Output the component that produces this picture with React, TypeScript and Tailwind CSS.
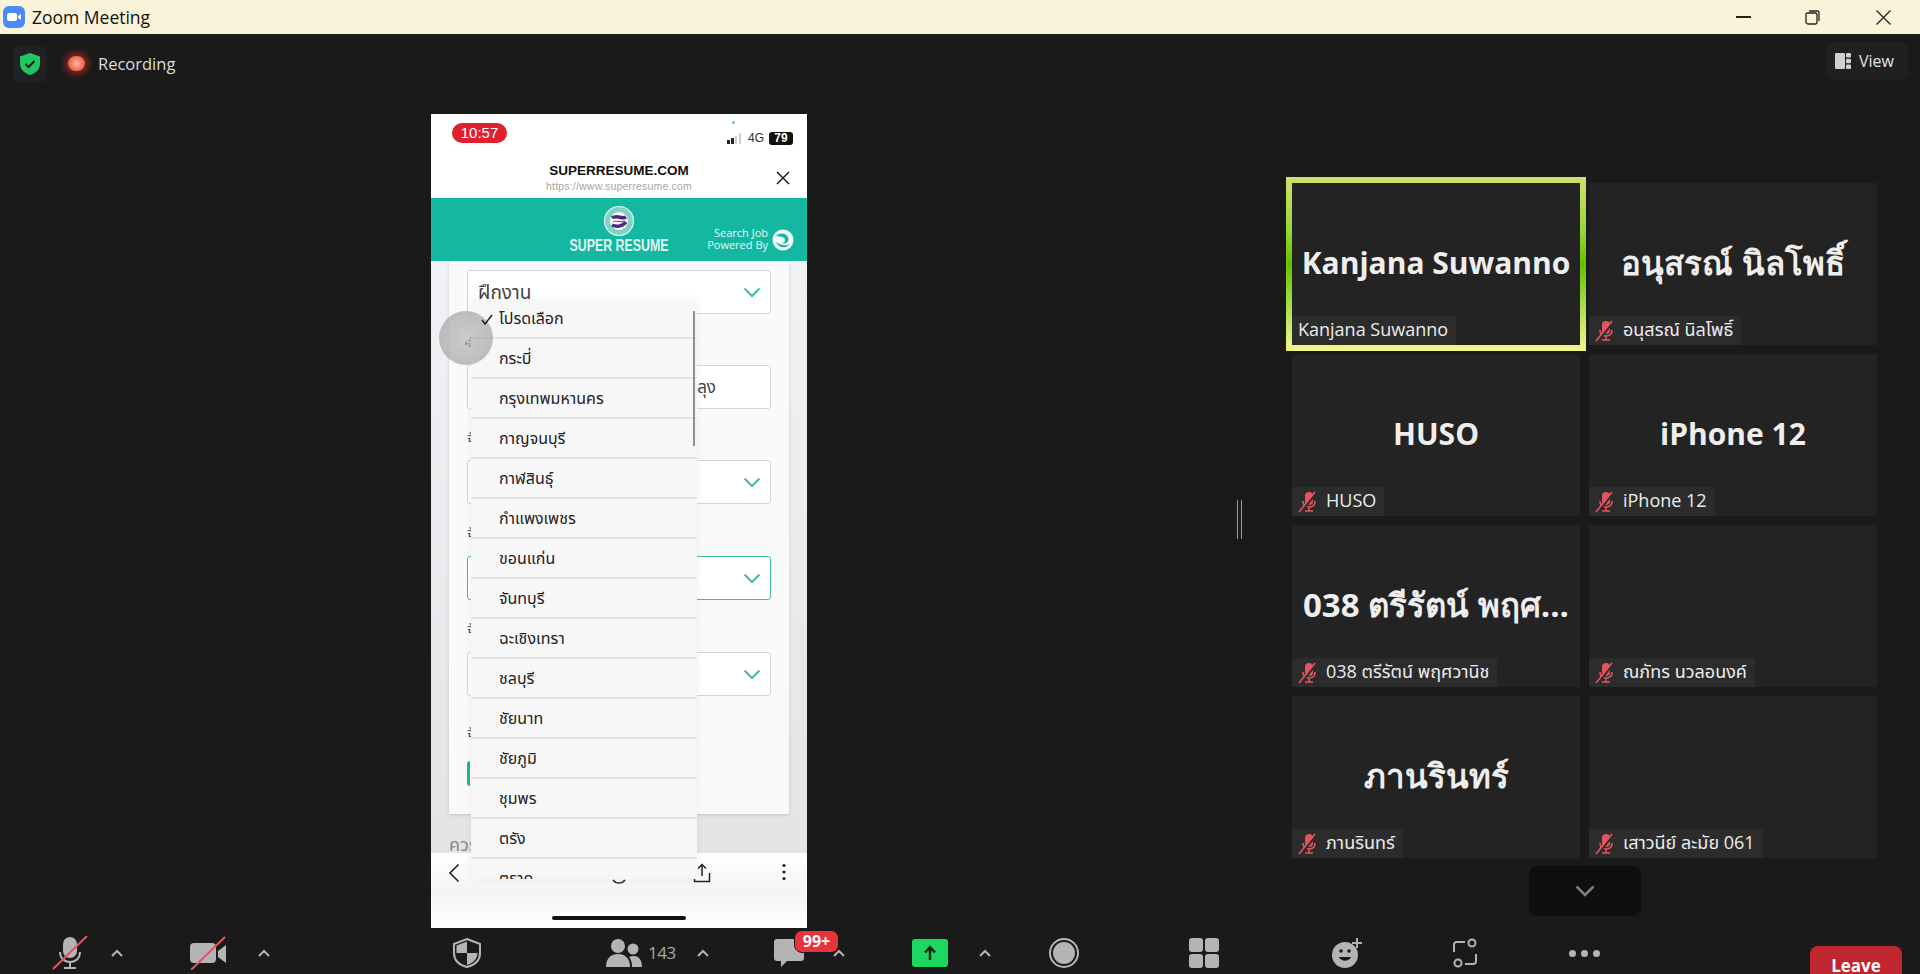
const thai = "font-['Open_Sans','Noto_Sans','Noto_Sans_Thai','Liberation_Sans',sans-serif]";

const provinces = [
  'โปรดเลือก', 'กระบี่', 'กรุงเทพมหานคร', 'กาญจนบุรี', 'กาฬสินธุ์', 'กำแพงเพชร', 'ขอนแก่น', 'จันทบุรี',
  'ฉะเชิงเทรา', 'ชลบุรี', 'ชัยนาท', 'ชัยภูมิ', 'ชุมพร', 'ตรัง', 'ตราด',
];

const tiles = [
  { big: 'Kanjana Suwanno', bigSize: 'text-[30px]', name: 'Kanjana Suwanno', active: true },
  { big: 'อนุสรณ์ นิลโพธิ์', bigSize: 'text-[33px]', name: 'อนุสรณ์ นิลโพธิ์' },
  { big: 'HUSO', bigSize: 'text-[30px]', name: 'HUSO' },
  { big: 'iPhone 12', bigSize: 'text-[30px]', name: 'iPhone 12' },
  { big: '038 ตรีรัตน์ พฤศ...', bigSize: 'text-[33px]', name: '038 ตรีรัตน์ พฤศวานิช' },
  { big: '', bigSize: '', name: 'ณภัทร นวลอนงค์' },
  { big: 'ภานรินทร์', bigSize: 'text-[33px]', name: 'ภานรินทร์' },
  { big: '', bigSize: '', name: 'เสาวนีย์ ละมัย 061' },
];

function MutedMic() {
  return (
    <svg width="20" height="22" viewBox="0 0 20 22" className="shrink-0">
      <rect x="7" y="1" width="8" height="13" rx="4" fill="#e4545e" />
      <path d="M5 10c0 4 2 6 6 6s6-2 6-6M11 16v4M7 20h8" stroke="#e4545e" strokeWidth="1.6" fill="none" />
      <path d="M3 21 19 1" stroke="#2d2d2d" strokeWidth="2.500" />
      <path d="M1 21 17 1" stroke="#e4545e" strokeWidth="1.6" />
    </svg>
  );
}

function Caret() {
  return (
    <svg width="12" height="8" viewBox="0 0 12 8" className="shrink-0">
      <path d="M1 7l5-5 5 5" stroke="#b4b4b4" strokeWidth="2" fill="none" />
    </svg>
  );
}

function GreenChevron() {
  return (
    <svg width="18" height="11" viewBox="0 0 18 11" className="shrink-0">
      <path d="M1.500 1.500 9 9l7.500-7.500" stroke="#3fbf9f" strokeWidth="2" fill="none" />
    </svg>
  );
}

function Select({ text, green }: { text?: string; green?: boolean }) {
  return (
    <div
      className={`h-[44px] flex items-center justify-between pl-[10px] pr-[9px] rounded-[3px] border ${
        green ? 'border-[#3fbf9f]' : 'border-[#d5d5d8]'
      } bg-white`}
    >
      <span className="text-[19px] text-[#444]">{text}</span>
      <GreenChevron />
    </div>
  );
}

function Label({ tall }: { tall?: boolean }) {
  return (
    <div className={`${tall ? 'h-[52px]' : 'h-[51px]'} pt-[22px] text-[13px] leading-none text-[#444]`}>จังหวัด</div>
  );
}

function Phone() {
  return (
    <div className="relative w-[376px] h-[814px] ml-[431px] shrink-0 flex flex-col bg-white overflow-hidden">
      {/* status bar */}
      <div className="h-[46px] shrink-0 flex items-start justify-between pt-[9px] pl-[21px] pr-[14px]">
        <div className="w-[55px] h-[20px] rounded-full bg-[#e1202f] text-white text-[15px] leading-[20px] text-center font-['Liberation_Sans',sans-serif]">
          10:57
        </div>
        <div className="flex items-center gap-[5px] mt-[6px] text-[12px] text-[#333] font-['Liberation_Sans',sans-serif]">
          <svg width="16" height="11" viewBox="0 0 16 11">
            <rect x="0" y="7" width="3" height="4" fill="#222" />
            <rect x="4" y="5" width="3" height="6" fill="#222" />
            <rect x="8" y="3" width="2" height="8" fill="#ccc" />
            <rect x="12" y="0" width="2" height="11" fill="#ccc" />
          </svg>
          <span>4G</span>
          <span className="w-[24px] h-[13px] rounded-[3px] bg-[#111] text-white font-bold leading-[13px] text-center">79</span>
        </div>
      </div>
      <div className="absolute left-[301px] top-[7px] w-[3px] h-[3px] rounded-full bg-[#5ad66f]" />

      {/* title */}
      <div className="relative h-[38px] shrink-0 text-center pt-[2px] font-['Liberation_Sans',sans-serif]">
        <div className="text-[13.500px] font-bold leading-[17px] text-[#111]">SUPERRESUME.COM</div>
        <div className="text-[10.500px] leading-[14px] text-[#a6a6a6] tracking-[0.2px]">https://www.superresume.com</div>
        <svg width="14" height="14" viewBox="0 0 14 14" className="absolute right-[17px] top-[11px]">
          <path d="M1 1l12 12M13 1 1 13" stroke="#111" strokeWidth="1.400" />
        </svg>
      </div>

      {/* teal banner */}
      <div className="relative h-[63px] shrink-0 bg-[#14b8a0] flex flex-col items-center pt-[7px]">
        <svg width="32" height="32" viewBox="0 0 32 32">
          <circle cx="16" cy="16" r="14.500" fill="#7fd3c3" stroke="#dff5f0" strokeWidth="1.200" />
          <circle cx="16" cy="16" r="9" fill="#fff" />
          <path d="M9 13c5-4 10 2 14-1M9 20c4 2 10 2 14-3" stroke="#4b2a82" strokeWidth="3.500" fill="none" />
          <path d="M10 16.500c4-1 8 1 12-.5" stroke="#d8356b" strokeWidth="1.200" fill="none" />
        </svg>
        <div className="text-[16.500px] leading-[18px] font-bold text-[#e4f7f3] font-['Liberation_Sans',sans-serif] scale-x-[0.75] -mt-[1px] whitespace-nowrap">
          SUPER RESUME
        </div>
        <div className="absolute right-[39px] top-[29px] text-right text-[11px] leading-[12px] text-[#e6f9f5] font-['Open_Sans',sans-serif]">
          <div>Search Job</div>
          <div>Powered By</div>
        </div>
        <svg width="22" height="22" viewBox="0 0 22 22" className="absolute right-[13px] top-[31px]">
          <circle cx="11" cy="11" r="10.500" fill="#f2fbf9" />
          <path d="M4 7c4-4 10-3 12 1s-2 8-6 6c3 0 4-3 2-5s-5-1-8-2zM4 13c2 5 9 8 14 2-3 2-9 2-14-2z" fill="#14b8a0" />
        </svg>
      </div>

      {/* page behind the menu */}
      <div className={`relative h-[592px] shrink-0 overflow-hidden bg-gradient-to-b from-[#f0f2f5] to-[#e4e4e6] ${thai}`}>
        <div className="mx-[18px] h-[553px] bg-[#fbfafb] px-[18px] pt-[9px] shadow-[0_1px_3px_rgba(0,0,0,0.15)]">
          <Select text="ฝึกงาน" />
          <Label />
          <div className="h-[44px] flex items-center rounded-[3px] border border-[#d5d5d8] bg-white">
            <span className="text-[17px] text-[#444] pl-[207px]">พัทลุง</span>
          </div>
          <Label />
          <Select />
          <Label tall />
          <Select green />
          <Label tall />
          <Select />
          <div className="h-[65px] pt-[30px] text-[13px] leading-none text-[#444]">จังหวัด</div>
          <div className="w-[80px] h-[25px] rounded-[3px] border-l-[3px] border-[#1fb894] bg-white" />
        </div>
        <div className="absolute left-[18px] top-[574px] text-[18px] leading-none text-[#8a8a8a]">ควร</div>
      </div>

      {/* bottom browser bar */}
      <div className="relative h-[75px] shrink-0 bg-gradient-to-b from-white via-[#f4f4f4] to-white flex items-start pl-[17px] pt-[10px]">
        <svg width="12" height="20" viewBox="0 0 12 20" className="shrink-0">
          <path d="M10.500 1.500 2 10l8.500 8.500" stroke="#222" strokeWidth="1.600" fill="none" />
        </svg>
        <svg width="14" height="6" viewBox="0 0 14 6" className="shrink-0 mt-[16px] ml-[152px]">
          <path d="M1 1c3 4 9 4 12 0" stroke="#333" strokeWidth="1.500" fill="none" />
        </svg>
        <svg width="18" height="20" viewBox="0 0 18 20" className="shrink-0 ml-[67px]">
          <path d="M9 13V2M5 5.500 9 1.500l4 4M1.500 10v8.500h15V10" stroke="#222" strokeWidth="1.500" fill="none" />
        </svg>
        <svg width="4" height="18" viewBox="0 0 4 18" className="shrink-0 ml-[71px]">
          <circle cx="2" cy="2.500" r="1.600" fill="#222" />
          <circle cx="2" cy="9" r="1.600" fill="#222" />
          <circle cx="2" cy="15.500" r="1.600" fill="#222" />
        </svg>
        <div className="absolute left-[121px] bottom-[8px] w-[134px] h-[4px] rounded-full bg-[#111]" />
      </div>

      {/* native select menu */}
      <div className={`absolute left-[40px] top-[185px] w-[226px] h-[580px] overflow-hidden bg-[#f8f7f8] shadow-[0_0_8px_rgba(0,0,0,0.06)] ${thai}`}>
        {provinces.map((p, i) => (
          <div key={p} className="relative h-[40px] pl-[28px] flex items-center border-b-2 border-[#e2e1e3] text-[16px] text-[#222]">
            {i === 0 && (
              <svg width="12" height="11" viewBox="0 0 12 11" className="absolute z-10 left-[10px] top-[15px]">
                <path d="M1 6l3 4 7-9" stroke="#222" strokeWidth="1.500" fill="none" />
              </svg>
            )}
            {p}
          </div>
        ))}
        <div className="absolute left-[222px] top-[12px] w-[2px] h-[135px] bg-[#8f8f94]" />
      </div>

      {/* touch indicator */}
      <div className="absolute left-[8px] top-[197px] w-[54px] h-[54px] rounded-full bg-[radial-gradient(circle,#b8b8b8_0%,#a8a8a8_60%,#9a9a9a_100%)] opacity-70 flex items-center justify-center">
        <div className="w-[2px] h-[3px] mt-[10px] bg-[#666]" />
      </div>
    </div>
  );
}

function Tile({ big, bigSize, name, active }: { big: string; bigSize: string; name: string; active?: boolean }) {
  return (
    <div className="relative h-[162px] bg-[#232323]">
      {active && (
        <div className="absolute -inset-[6px] p-[6px] bg-[linear-gradient(#cfe06a,#9ad63a_30%,#66c000_50%,#9ed83f_70%,#f3f78c)]">
          <div className="w-full h-full bg-[#232323]" />
        </div>
      )}
      {big && (
        <div className={`absolute inset-x-0 top-[50px] text-center ${bigSize} leading-[60px] font-bold text-[#eeeeee] whitespace-nowrap font-['Open_Sans','Noto_Sans','Liberation_Sans',sans-serif]`}>
          {big}
        </div>
      )}
      <div className="absolute left-0 bottom-0 h-[29px] flex items-center gap-[8px] pl-[6px] pr-[8px] bg-[#2c2c2c] text-[18px] text-[#ececec]">
        {!active && <MutedMic />}
        <span className="-mt-[2px]">{name}</span>
      </div>
    </div>
  );
}

function Toolbar() {
  return (
    <div className="h-[46px] shrink-0 flex items-center pt-[4px] font-['Open_Sans',sans-serif] overflow-hidden">
      <svg width="36" height="34" viewBox="0 0 36 34" className="ml-[52px] shrink-0">
        <rect x="11" y="1" width="14" height="21" rx="7" fill="#b4b4b4" />
        <path d="M8 16c0 6 4 10 10 10s10-4 10-10M18 26v5M12 32h12" stroke="#b4b4b4" strokeWidth="2" fill="none" />
        <path d="M1 33 35 0" stroke="#e4545e" strokeWidth="2" />
      </svg>
      <div className="ml-[23px]"><Caret /></div>
      <svg width="36" height="34" viewBox="0 0 36 34" className="ml-[67px] shrink-0">
        <path d="M4 7h18a4 4 0 0 1 4 4v12a4 4 0 0 1-4 4H4a4 4 0 0 1-4-4V11a4 4 0 0 1 4-4zM28 15l8-6v18l-8-6z" fill="#b4b4b4" />
        <path d="M1 34 35 1" stroke="#e4545e" strokeWidth="2" />
      </svg>
      <div className="ml-[32px]"><Caret /></div>
      <svg width="28" height="30" viewBox="0 0 28 30" className="ml-[183px] shrink-0">
        <path d="M14 1 27 6v9c0 7-5 12-13 14C6 27 1 22 1 15V6z" fill="none" stroke="#b4b4b4" strokeWidth="2" />
        <path d="M14 3.500 3.500 7.500V15H14zM14 15v12c6-2 10.500-6 10.500-12z" fill="#b4b4b4" />
      </svg>
      <svg width="36" height="28" viewBox="0 0 36 28" className="ml-[125px] shrink-0">
        <circle cx="12" cy="7" r="7" fill="#b4b4b4" />
        <path d="M0 28c0-9 5-13 12-13s12 4 12 13z" fill="#b4b4b4" />
        <circle cx="27" cy="10" r="5.500" fill="#b4b4b4" />
        <path d="M26 28c0-5-1-8-3-10 2-1 3-1 5-1 5 0 8 4 8 11z" fill="#b4b4b4" />
      </svg>
      <span className="ml-[6px] w-[27px] shrink-0 text-[17px] text-[#a8a8a8] tracking-[-0.5px]">143</span>
      <div className="ml-[22px]"><Caret /></div>
      <div className="relative ml-[65px] w-[30px] h-[28px] shrink-0">
        <svg width="30" height="28" viewBox="0 0 30 28">
          <path d="M3 0h24a3 3 0 0 1 3 3v16a3 3 0 0 1-3 3H13l-6 6v-6H3a3 3 0 0 1-3-3V3a3 3 0 0 1 3-3z" fill="#b4b4b4" />
        </svg>
        <div className="absolute left-[20px] -top-[9px] w-[45px] h-[23px] rounded-[8px] bg-[#e8333c] border border-[#1a1a1a] text-white text-[16px] font-bold leading-[20px] text-center">
          99+
        </div>
      </div>
      <div className="ml-[29px]"><Caret /></div>
      <div className="ml-[67px] w-[36px] h-[28px] shrink-0 rounded-[3px] bg-[#1ed760] flex items-center justify-center">
        <svg width="14" height="16" viewBox="0 0 14 16">
          <path d="M7 15V3M2 7.500 7 2l5 5.500" stroke="#0c2a16" strokeWidth="2.500" fill="none" />
        </svg>
      </div>
      <div className="ml-[31px]"><Caret /></div>
      <div className="ml-[58px] w-[30px] h-[30px] shrink-0 rounded-full border-2 border-[#b4b4b4] p-[2px]">
        <div className="w-full h-full rounded-full bg-[#b4b4b4]" />
      </div>
      <div className="ml-[110px] w-[30px] h-[30px] shrink-0 grid grid-cols-2 gap-[2px]">
        <div className="rounded-[3px] bg-[#b4b4b4]" />
        <div className="rounded-[3px] bg-[#b4b4b4]" />
        <div className="rounded-[3px] bg-[#b4b4b4]" />
        <div className="rounded-[3px] bg-[#b4b4b4]" />
      </div>
      <svg width="30" height="30" viewBox="0 0 30 30" className="ml-[113px] shrink-0">
        <circle cx="13" cy="17" r="13" fill="#b4b4b4" />
        <circle cx="9" cy="13" r="1.800" fill="#1a1a1a" />
        <circle cx="17" cy="13" r="1.800" fill="#1a1a1a" />
        <path d="M7 19c2 5 10 5 12 0z" fill="#1a1a1a" />
        <path d="M25 0v10M20 5h10" stroke="#b4b4b4" strokeWidth="2" />
      </svg>
      <svg width="24" height="30" viewBox="0 0 24 30" className="ml-[91px] shrink-0">
        <path d="M1 14V7a3 3 0 0 1 3-3h8M23 16v7a3 3 0 0 1-3 3h-8" stroke="#b4b4b4" strokeWidth="2" fill="none" />
        <circle cx="19" cy="5" r="3.500" stroke="#b4b4b4" strokeWidth="2" fill="none" />
        <circle cx="5" cy="25" r="3.500" stroke="#b4b4b4" strokeWidth="2" fill="none" />
      </svg>
      <div className="ml-[92px] w-[31px] shrink-0 flex justify-between">
        <div className="w-[7px] h-[7px] rounded-full bg-[#b4b4b4]" />
        <div className="w-[7px] h-[7px] rounded-full bg-[#b4b4b4]" />
        <div className="w-[7px] h-[7px] rounded-full bg-[#b4b4b4]" />
      </div>
      <div className="ml-[210px] w-[92px] h-[46px] shrink-0 self-start mt-[14px] rounded-[8px] bg-[#c0262d] text-white text-[17px] font-bold text-center pt-[8px] leading-[24px]">
        Leave
      </div>
    </div>
  );
}

export default function App() {
  return (
    <div className={`w-[1920px] h-[974px] flex flex-col overflow-hidden bg-[#1a1a1a] ${thai}`}>
      {/* window title bar */}
      <div className="h-[34px] shrink-0 bg-[#faf3d9] flex items-center pl-[3px]">
        <svg width="22" height="22" viewBox="0 0 22 22" className="shrink-0">
          <rect width="22" height="22" rx="6" fill="#4a8cf7" />
          <rect x="4" y="7" width="10" height="8" rx="2" fill="#fff" />
          <path d="M15 10l3-2v6l-3-2z" fill="#fff" />
        </svg>
        <span className="ml-[7px] text-[17.500px] text-[#111]">Zoom Meeting</span>
        <div className="ml-auto flex items-center">
          <div className="w-[15px] h-[1.500px] bg-[#222]" />
          <svg width="15" height="15" viewBox="0 0 15 15" className="ml-[54px]">
            <rect x="1" y="3" width="11" height="11" rx="2" fill="none" stroke="#222" strokeWidth="1.300" />
            <path d="M4 1h8a2 2 0 0 1 2 2v8" fill="none" stroke="#222" strokeWidth="1.300" />
          </svg>
          <svg width="15" height="15" viewBox="0 0 15 15" className="ml-[56px] mr-[29px]">
            <path d="M.5.5l14 14M14.500.5l-14 14" stroke="#222" strokeWidth="1.300" />
          </svg>
        </div>
      </div>

      {/* meeting info row */}
      <div className="h-[80px] shrink-0 flex items-start pt-[8px] pl-[13px] pr-[12px]">
        <div className="mt-[4px] w-[34px] h-[36px] rounded-[6px] bg-[#202124] flex items-center justify-center">
          <svg width="20" height="22" viewBox="0 0 20 22">
            <path d="M10 0l10 3.500V11c0 5-4 9-10 11C4 20 0 16 0 11V3.500z" fill="#22c55e" />
            <path d="M5.500 11l3 3 6-6" stroke="#123" strokeWidth="2" fill="none" />
          </svg>
        </div>
        <div className="ml-[21px] mt-[14px] w-[17px] h-[15px] rounded-full bg-[radial-gradient(circle,#ffb9ad_0%,#f4694f_60%,#e2503f_100%)] shadow-[0_0_7px_3px_rgba(230,60,50,0.55)]" />
        <span className="ml-[13px] mt-[10px] text-[16.500px] leading-[24px] text-[#dddddd]">Recording</span>
        <div className="ml-auto w-[82px] h-[38px] rounded-[8px] bg-[#202020] flex items-center pl-[9px] gap-[8px] text-[16px] text-[#e4e4e4]">
          <svg width="16" height="16" viewBox="0 0 16 16">
            <rect x="0" y="0" width="10" height="16" rx="1" fill="#cfcfcf" />
            <rect x="11" y="0" width="5" height="4.500" rx="1" fill="#cfcfcf" />
            <rect x="11" y="5.750" width="5" height="4.500" rx="1" fill="#cfcfcf" />
            <rect x="11" y="11.500" width="5" height="4.500" rx="1" fill="#cfcfcf" />
          </svg>
          View
        </div>
      </div>

      {/* phone share and gallery */}
      <div className="h-[814px] shrink-0 flex items-start">
        <Phone />
        <div className="ml-[430px] mt-[386px] w-[5px] h-[39px] shrink-0 border-x border-[#9a9a9a]" />
        <div className="ml-[50px] w-[585px] shrink-0 pt-[69px] flex flex-col items-center">
          <div className="w-full grid grid-cols-2 gap-x-[9px] gap-y-[9px]">
            {tiles.map((t) => (
              <Tile key={t.name} {...t} />
            ))}
          </div>
          <div className="mt-[8px] w-[112px] h-[50px] rounded-[8px] bg-[#0f0f0f] flex items-center justify-center">
            <svg width="20" height="12" viewBox="0 0 20 12">
              <path d="M1.500 1.500 10 10l8.500-8.500" stroke="#7d7d85" strokeWidth="2.500" fill="none" />
            </svg>
          </div>
        </div>
      </div>

      <Toolbar />
    </div>
  );
}
